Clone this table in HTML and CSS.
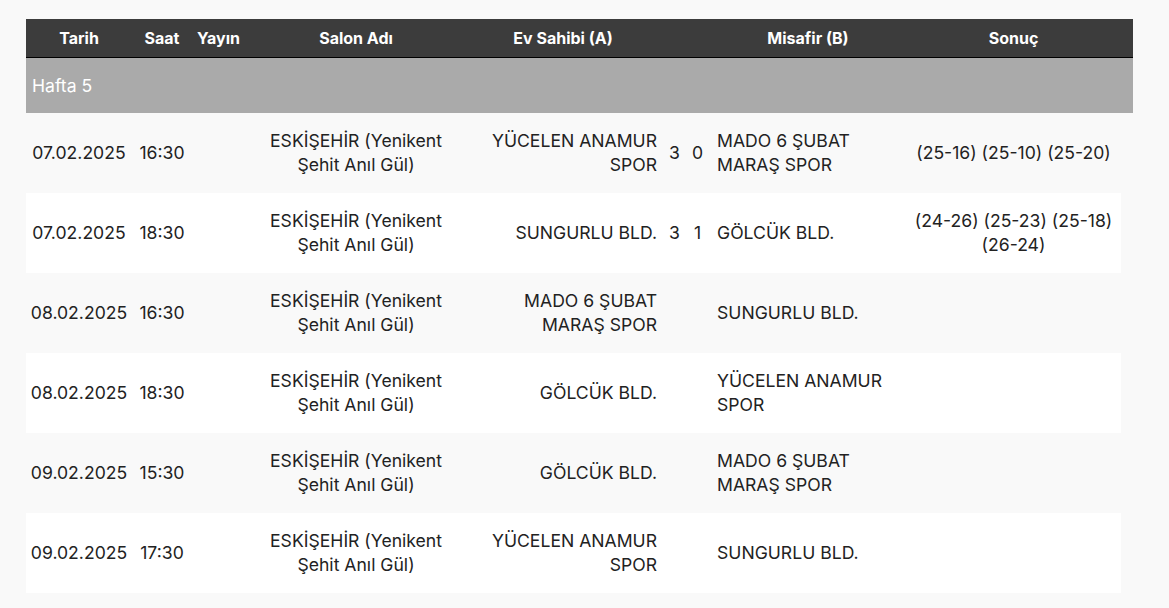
FILE: index.html
```html
<!DOCTYPE html>
<html lang="tr">
<head>
<meta charset="utf-8">
<title>Fikstür</title>
<link rel="stylesheet" href="styles.css">
</head>
<body>
<div class="fixture">
  <div class="head-row">
    <div class="row-grid">
      <div class="hc">Tarih</div>
      <div class="hc">Saat</div>
      <div class="hc">Yayın</div>
      <div class="hc">Salon Adı</div>
      <div class="hc home-h">Ev Sahibi (A)</div>
      <div class="hc"></div>
      <div class="hc"></div>
      <div class="hc">Misafir (B)</div>
      <div class="hc">Sonuç</div>
    </div>
  </div>
  <div class="week-row">Hafta 5</div>

  <div class="row-grid match odd">
    <div class="c center">07.02.2025</div>
    <div class="c center">16:30</div>
    <div class="c center"></div>
    <div class="c center">ESKİŞEHİR (Yenikent Şehit Anıl Gül)</div>
    <div class="c right">YÜCELEN ANAMUR SPOR</div>
    <div class="c center score">3</div>
    <div class="c center score">0</div>
    <div class="c left">MADO 6 ŞUBAT MARAŞ SPOR</div>
    <div class="c center">(25-16) (25-10) (25-20)</div>
  </div>

  <div class="row-grid match even">
    <div class="c center">07.02.2025</div>
    <div class="c center">18:30</div>
    <div class="c center"></div>
    <div class="c center">ESKİŞEHİR (Yenikent Şehit Anıl Gül)</div>
    <div class="c right">SUNGURLU BLD.</div>
    <div class="c center score">3</div>
    <div class="c center score">1</div>
    <div class="c left">GÖLCÜK BLD.</div>
    <div class="c center">(24-26) (25-23) (25-18) (26-24)</div>
  </div>

  <div class="row-grid match odd">
    <div class="c center">08.02.2025</div>
    <div class="c center">16:30</div>
    <div class="c center"></div>
    <div class="c center">ESKİŞEHİR (Yenikent Şehit Anıl Gül)</div>
    <div class="c right">MADO 6 ŞUBAT MARAŞ SPOR</div>
    <div class="c center score"></div>
    <div class="c center score"></div>
    <div class="c left">SUNGURLU BLD.</div>
    <div class="c center"></div>
  </div>

  <div class="row-grid match even">
    <div class="c center">08.02.2025</div>
    <div class="c center">18:30</div>
    <div class="c center"></div>
    <div class="c center">ESKİŞEHİR (Yenikent Şehit Anıl Gül)</div>
    <div class="c right">GÖLCÜK BLD.</div>
    <div class="c center score"></div>
    <div class="c center score"></div>
    <div class="c left">YÜCELEN ANAMUR SPOR</div>
    <div class="c center"></div>
  </div>

  <div class="row-grid match odd">
    <div class="c center">09.02.2025</div>
    <div class="c center">15:30</div>
    <div class="c center"></div>
    <div class="c center">ESKİŞEHİR (Yenikent Şehit Anıl Gül)</div>
    <div class="c right">GÖLCÜK BLD.</div>
    <div class="c center score"></div>
    <div class="c center score"></div>
    <div class="c left">MADO 6 ŞUBAT MARAŞ SPOR</div>
    <div class="c center"></div>
  </div>

  <div class="row-grid match even">
    <div class="c center">09.02.2025</div>
    <div class="c center">17:30</div>
    <div class="c center"></div>
    <div class="c center">ESKİŞEHİR (Yenikent Şehit Anıl Gül)</div>
    <div class="c right">YÜCELEN ANAMUR SPOR</div>
    <div class="c center score"></div>
    <div class="c center score"></div>
    <div class="c left">SUNGURLU BLD.</div>
    <div class="c center"></div>
  </div>
</div>
</body>
</html>
```

FILE: styles.css
```css
html, body {
  margin: 0;
  padding: 0;
  background: #f9f9f9;
}
body {
  font-family: Inter, "Noto Sans", "Liberation Sans", sans-serif;
  color: #222222;
  padding: 19px 26px;
}
.fixture {
  width: 1107px;
}
.row-grid {
  display: grid;
  grid-template-columns: 106px 60px 53px 222px 197px 21px 25px 196px 215px;
  width: 1095px;
}
.head-row {
  background: #3c3c3c;
  border-bottom: 1px solid #000;
  height: 38px;
}
.hc {
  color: #ffffff;
  font-weight: 700;
  font-size: 16px;
  line-height: 38px;
  text-align: center;
  white-space: nowrap;
}
.home-h {
  padding-right: 5px;
}
.week-row {
  background: #aaaaaa;
  color: #ffffff;
  height: 55px;
  line-height: 55px;
  font-size: 17.6px;
  padding-left: 6px;
}
.match {
  height: 80px;
  font-size: 17.6px;
  line-height: 24px;
}
.match.odd {
  background: #f9f9f9;
}
.match.even {
  background: #ffffff;
}
.c {
  display: flex;
  align-items: center;
  padding: 0 7px;
}
.c.center {
  justify-content: center;
  text-align: center;
}
.c.right {
  justify-content: flex-end;
  text-align: right;
}
.c.left {
  justify-content: flex-start;
  text-align: left;
}
.c.score {
  padding: 0;
}
```
